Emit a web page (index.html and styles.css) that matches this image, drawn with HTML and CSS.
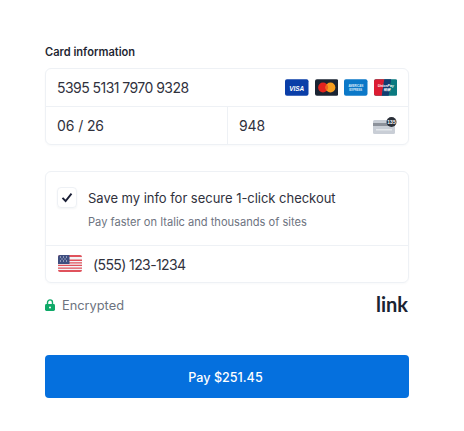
FILE: index.html
```html
<!DOCTYPE html>
<html lang="en">
<head>
<meta charset="utf-8">
<title>Checkout</title>
<link rel="stylesheet" href="styles.css">
</head>
<body>
<main class="form">
  <div class="label">Card information</div>
  <section class="box card-box">
    <div class="row card-row">
      <span class="value number">5395 5131 7970 9328</span>
      <div class="brands">
        <svg class="brand" viewBox="0 0 24 17"><rect width="24" height="17" rx="2" fill="#0a3ea8"/><text x="12" y="11.6" class="visa-t">VISA</text></svg>
        <svg class="brand" viewBox="0 0 24 17"><rect width="24" height="17" rx="2" fill="#1a2433"/><circle cx="8.2" cy="8.5" r="5" fill="#e3231f"/><circle cx="15.8" cy="8.5" r="5" fill="#f69e1e"/><path d="M12 5.2a5 5 0 0 1 0 6.6a5 5 0 0 1 0-6.6z" fill="#f0641e"/></svg>
        <svg class="brand" viewBox="0 0 24 17"><rect width="24" height="17" rx="2" fill="#0b78c8"/><text x="12" y="8" class="amex-t">AMERICAN</text><text x="12" y="11.6" class="amex-t">EXPRESS</text></svg>
        <svg class="brand" viewBox="0 0 24 17"><rect width="24" height="17" rx="2" fill="#0b7a80"/><path d="M2 0h8.5L8 17H2a2 2 0 0 1-2-2V2a2 2 0 0 1 2-2z" fill="#dc1c32"/><path d="M10.5 0h7L15 17H8z" fill="#123c70"/><text x="12" y="8" class="up-t">UnionPay</text><text x="13" y="12.4" class="up-t">银联</text></svg>
      </div>
    </div>
    <div class="split">
      <div class="row half"><span class="value">06 / 26</span></div>
      <div class="row half half-cvc">
        <span class="value">948</span>
        <svg class="cvc" viewBox="0 0 24 17"><rect x="0" y="3" width="22" height="14" rx="1.5" fill="#c9ced6"/><rect x="0" y="6" width="22" height="3" fill="#8d929b"/><rect x="3" y="12" width="16" height="1.5" fill="#e4e7eb"/><circle cx="18.5" cy="5" r="5" fill="#2a2f38"/><text x="18.5" y="7" class="cvc-t">135</text></svg>
      </div>
    </div>
  </section>
  <section class="box save-box">
    <div class="save">
      <span class="check"><svg viewBox="0 0 12 11" width="12" height="11"><path d="M1.5 5.8 4.6 9 10.5 1.6" fill="none" stroke="#1a1f36" stroke-width="1.9"/></svg></span>
      <div class="save-text">
        <div class="save-title">Save my info for secure 1-click checkout</div>
        <div class="save-sub">Pay faster on Italic and thousands of sites</div>
      </div>
    </div>
    <div class="phone">
      <svg class="flag" viewBox="0 0 24 17">
        <rect width="24" height="17" rx="2" fill="#f4f4f6"/>
        <path d="M0 2a2 2 0 0 1 2-2h20a2 2 0 0 1 2 2H0zM0 4.6h24v1.3H0zM0 7.2h24v1.3H0zM0 9.8h24v1.3H0zM0 12.4h24v1.3H0zM0 15h24a2 2 0 0 1-2 2H2a2 2 0 0 1-2-2z" fill="#e0525c"/>
        <path d="M2 0h9.5v9H0V2a2 2 0 0 1 2-2z" fill="#3f4f80"/>
        <path d="M2 2h1M5 2h1M8 2h1M3.5 4h1M6.5 4h1M2 6h1M5 6h1M8 6h1" stroke="#dfe3ee" stroke-width="1"/>
      </svg>
      <span class="value tel">(555) 123-1234</span>
    </div>
  </section>
  <div class="foot">
    <div class="enc">
      <svg class="lock" viewBox="0 0 10 12" width="10" height="12"><path d="M2.5 5.5V3.4a2.5 2.5 0 0 1 5 0v2.1" fill="none" stroke="#0fa968" stroke-width="1.4"/><rect y="5" width="10" height="7" rx="1.4" fill="#0fa968"/><circle cx="5" cy="8.4" r="1" fill="#fff"/></svg>
      <span>Encrypted</span>
    </div>
    <span class="link">link</span>
  </div>
  <button class="pay">Pay $251.45</button>
</main>
</body>
</html>
```
FILE: styles.css
```css
* { box-sizing: border-box; }
html, body { margin: 0; padding: 0; background: #fff; }
body { width: 464px; height: 431px; overflow: hidden; font-family: Inter, "Liberation Sans", sans-serif; color: #30313d; }
.form { padding: 45px 55px 0 45px; }
.label { font-size: 11.1px; font-weight: 600; line-height: 14px; color: #1f2733; margin-bottom: 9px; }
.box { border: 1px solid #eef1f5; border-radius: 6px; box-shadow: 0 1px 2px rgba(30,50,80,.03); }
.card-box { height: 77px; }
.row { display: flex; align-items: center; justify-content: space-between; }
.card-row { height: 38px; padding: 0 11px 0 11px; border-bottom: 1px solid #eef1f5; }
.value { font-size: 14px; letter-spacing: -0.1px; color: #30313d; }
.number { letter-spacing: -0.55px; }
.tel { letter-spacing: -0.6px; }
.brands { display: flex; gap: 6px; }
.brand { width: 23.5px; height: 17px; display: block; }
.visa-t { font: italic 800 6.6px "Liberation Sans", sans-serif; fill: #fff; text-anchor: middle; }
.amex-t { font: 700 2.8px "Liberation Sans", sans-serif; fill: #dfeefa; text-anchor: middle; }
.up-t { font: italic 700 3.6px "Liberation Sans", "Noto Sans CJK SC", sans-serif; fill: #fff; text-anchor: middle; }
.split { display: flex; height: 37px; }
.half { width: 50%; padding: 0 11px; }
.half-cvc { padding-right: 11px; border-left: 1px solid #eef1f5; }
.cvc { width: 24px; height: 17px; display: block; margin-top: -1px; }
.cvc-t { font: 700 5px "Liberation Sans", sans-serif; fill: #fff; text-anchor: middle; }
.save-box { margin-top: 26px; height: 112px; }
.save { display: flex; height: 74px; padding: 15px 12px 0 11px; border-bottom: 1px solid #eef1f5; }
.check { width: 20px; height: 21px; flex: none; display: flex; align-items: center; justify-content: center; border: 1px solid #eef1f5; border-radius: 4px; box-shadow: 0 1px 2px rgba(30,50,80,.05); }
.save-text { margin-left: 11px; padding-top: 1px; }
.save-title { font-size: 13px; line-height: 20px; color: #30313d; letter-spacing: -0.03px; }
.save-sub { font-size: 11.1px; line-height: 14px; margin-top: 7px; color: #6d7380; }
.phone { display: flex; align-items: center; height: 36px; padding: 0 0 0 12px; }
.flag { width: 24px; height: 17px; display: block; margin-top: -1px; }
.phone .value { margin-left: 11px; }
.foot { display: flex; align-items: center; justify-content: space-between; margin-top: 12px; height: 20px; padding-right: 1px; }
.enc { display: flex; align-items: center; gap: 7px; font-size: 12.8px; color: #6d7380; }
.link { font-size: 20px; font-weight: 700; color: #1a2433; font-family: Lato, sans-serif; line-height: 20px; margin-top: -2px; }
.pay { display: block; width: 364px; height: 43px; margin-top: 40px; padding: 1px 3px 0 0; border: 0; border-radius: 4px; background: #0570de; color: #fff; font: 500 12.6px Inter, "Liberation Sans", sans-serif; }
```
